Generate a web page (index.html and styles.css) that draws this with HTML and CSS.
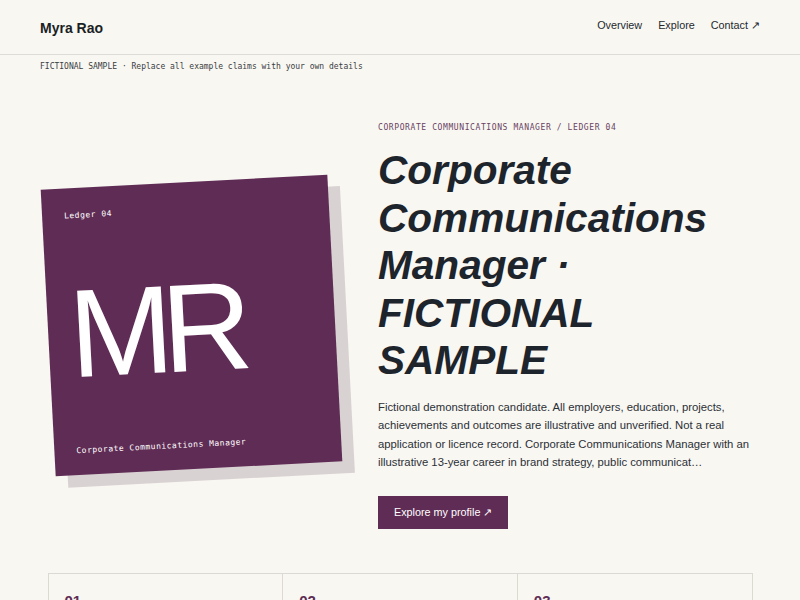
FILE: index.html
```html
<!DOCTYPE html>
<html lang="en">
<head>
<meta charset="utf-8">
<title>Myra Rao — Corporate Communications Manager</title>
<link rel="stylesheet" href="styles.css">
</head>
<body>
<header class="site-header">
  <div class="brand">Myra Rao</div>
  <nav class="nav">
    <a href="#overview">Overview</a>
    <a href="#explore">Explore</a>
    <a href="#contact">Contact ↗</a>
  </nav>
</header>
<div class="notice">FICTIONAL SAMPLE · Replace all example claims with your own details</div>
<main>
  <section class="hero">
    <div class="tile-col">
      <div class="tile">
        <div class="tile-label">Ledger 04</div>
        <div class="tile-initials">MR</div>
        <div class="tile-label">Corporate Communications Manager</div>
      </div>
    </div>
    <div class="hero-text">
      <div class="eyebrow">CORPORATE COMMUNICATIONS MANAGER / LEDGER 04</div>
      <h1 class="title">Corporate Communications Manager · FICTIONAL SAMPLE</h1>
      <p class="lede">Fictional demonstration candidate. All employers, education, projects, achievements and outcomes are illustrative and unverified. Not a real application or licence record. Corporate Communications Manager with an illustrative 13-year career in brand strategy, public communicat…</p>
      <a class="btn" href="#explore">Explore my profile ↗</a>
    </div>
  </section>
  <section class="cards">
    <div class="card"><div class="card-num">01</div><div class="card-title">Overview</div></div>
    <div class="card"><div class="card-num">02</div><div class="card-title">Experience</div></div>
    <div class="card"><div class="card-num">03</div><div class="card-title">Contact</div></div>
  </section>
</main>
</body>
</html>
```
FILE: styles.css
```css
* { box-sizing: border-box; }
html, body { margin: 0; padding: 0; }
body {
  background: #f8f7f2;
  color: #1e242b;
  font-family: "Liberation Sans", Arial, Helvetica, sans-serif;
  overflow: hidden;
}
a { color: inherit; text-decoration: none; }

.site-header {
  height: 55px;
  padding: 0 40px;
  display: flex;
  align-items: center;
  justify-content: space-between;
  border-bottom: 1px solid #dfdcd5;
}
.brand {
  font-weight: 700;
  font-size: 14px;
  padding-top: 1px;
  color: #1b1f24;
}
.nav {
  display: flex;
  gap: 16px;
  font-size: 10.8px;
  color: #25292e;
  padding-bottom: 4px;
}

.notice {
  padding: 6px 40px;
  font-family: "DejaVu Sans Mono", monospace;
  font-size: 8px;
  line-height: 12px;
  color: #3a3d42;
}

.hero {
  display: grid;
  grid-template-columns: 310px 1fr;
  column-gap: 28px;
  align-items: center;
  padding: 43px 40px 44px;
}
.tile-col { display: flex; }
.tile {
  margin-left: 8px;
  width: 287px;
  height: 287px;
  background: #5f2c55;
  color: #fff;
  transform: rotate(-3deg);
  box-shadow: 12px 12px 0 #d9d2d3;
  padding: 22px 22px 18px;
  display: flex;
  flex-direction: column;
  justify-content: space-between;
}
.tile-label {
  font-family: "DejaVu Sans Mono", monospace;
  font-size: 8px;
  letter-spacing: 0.5px;
  line-height: 12px;
}
.tile-initials {
  font-size: 125px;
  line-height: 1;
  letter-spacing: -0.09em;
  margin-left: -1px;
}

.hero-text { display: flex; flex-direction: column; align-items: flex-start; }
.eyebrow {
  font-family: "DejaVu Sans Mono", monospace;
  font-size: 8px;
  line-height: 12px;
  letter-spacing: 0.6px;
  color: #6a4262;
  margin-bottom: 13px;
}
.title {
  margin: 0;
  font-size: 40.6px;
  line-height: 47.6px;
  font-weight: 700;
  font-style: italic;
  color: #1e242b;
}
.lede {
  margin: 13px 0 0;
  font-size: 11.3px;
  line-height: 18.4px;
  color: #2c3036;
}
.btn {
  margin-top: 24px;
  height: 33px;
  padding: 0 16px;
  display: inline-flex;
  align-items: center;
  background: #5f2c55;
  color: #fff;
  font-size: 10.8px;
}

.cards {
  width: 705px;
  margin: 0 auto;
  display: grid;
  grid-template-columns: repeat(3, 1fr);
  border-top: 1px solid #dcd9d2;
  border-left: 1px solid #dcd9d2;
}
.card {
  border-right: 1px solid #dcd9d2;
  border-bottom: 1px solid #dcd9d2;
  padding: 18px 16px 20px;
  min-height: 120px;
}
.card-num {
  font-weight: 700;
  font-size: 15px;
  color: #5f2c55;
}
.card-title {
  margin-top: 10px;
  font-size: 14px;
  font-weight: 700;
}
```
